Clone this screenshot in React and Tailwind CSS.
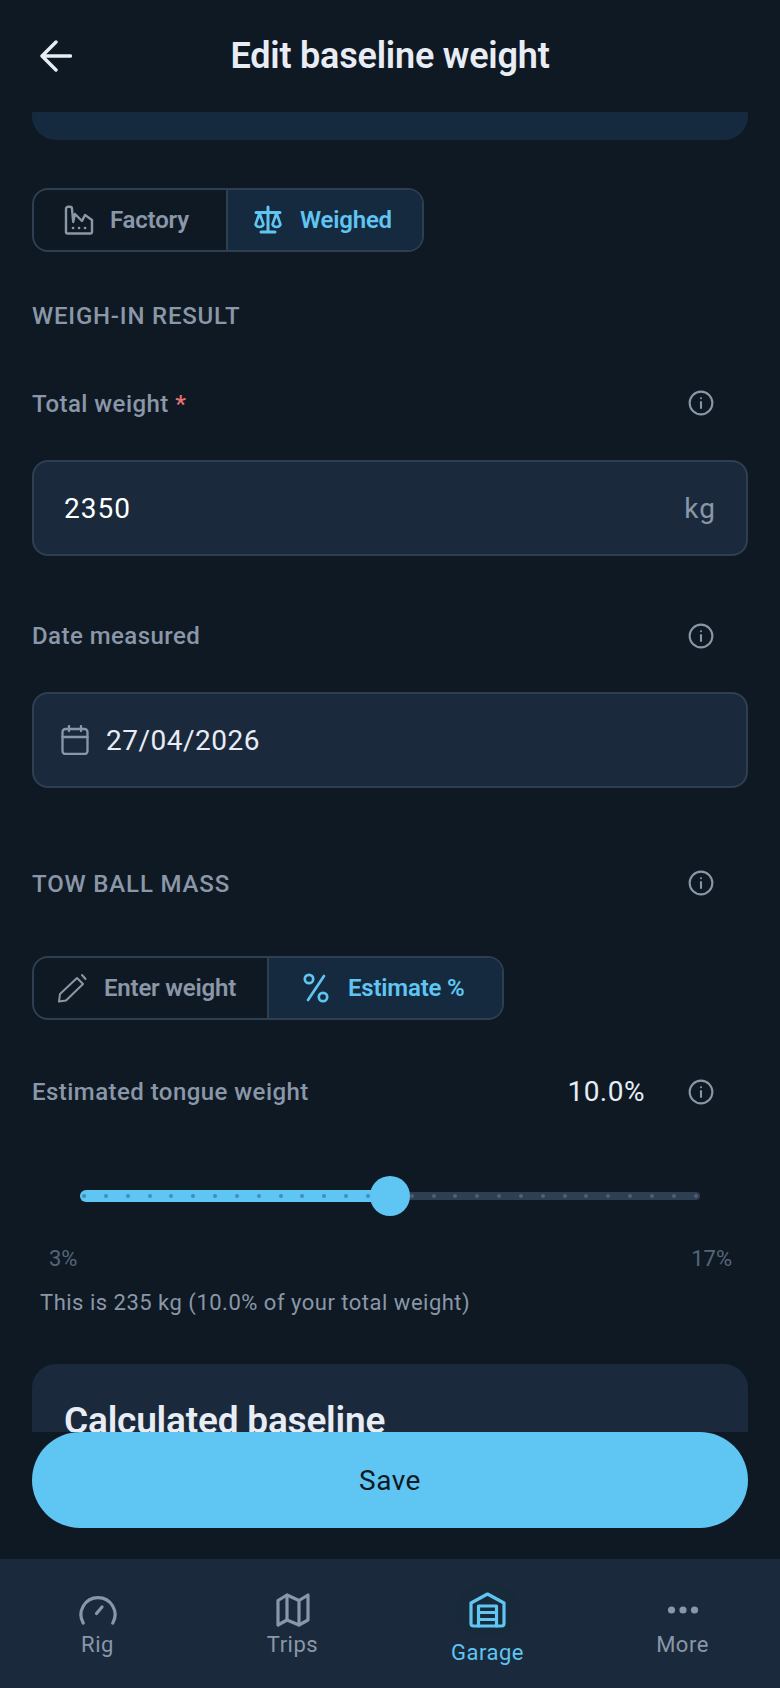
import React from "react";

const Info = () => (
  <svg viewBox="0 0 24 24" className="w-[26px] h-[26px] mr-[34px] text-[#8a97a8] shrink-0" fill="none" stroke="currentColor" strokeWidth="1.9" strokeLinecap="round">
    <circle cx="12" cy="12" r="10.5" />
    <path d="M12 11.2v5.3" />
    <circle cx="12" cy="7.6" r="0.4" fill="currentColor" strokeWidth="1.2" />
  </svg>
);

const Label = ({ children, className = "" }) => (
  <div className={"flex items-center justify-between h-12 " + className}>
    {children}
    <Info />
  </div>
);

const Seg = ({ active, icon, text, className = "" }) => (
  <div className={"flex items-center h-full text-[24px] font-semibold tracking-[-0.2px] " + (active ? "bg-[#162a3f] text-[#5fc5f2] " : "text-[#8a97a8] ") + className}>
    {icon}
    {text}
  </div>
);

const Factory = () => (
  <svg viewBox="0 0 30 30" className="w-[30px] h-[30px] mr-[16px]" fill="none" stroke="currentColor" strokeWidth="2.4" strokeLinejoin="round" strokeLinecap="round">
    <path d="M2 27V4a2.2 2.2 0 0 1 2.2-2.2h1.6A2.2 2.2 0 0 1 8 4l1.2 13L11 9l7 7 3-6 7 5v12a1.5 1.5 0 0 1-1.5 1.5h-23A1.5 1.5 0 0 1 2 27Z" />
    <path d="M9 23h.1M15 23h.1M21 23h.1" strokeWidth="2.6" />
  </svg>
);

const Scale = () => (
  <svg viewBox="0 0 30 30" className="w-[30px] h-[30px] mr-[17px]" fill="none" stroke="currentColor" strokeWidth="3" strokeLinejoin="round" strokeLinecap="round">
    <path d="M15 2v24M8 27h14M3 7.5h24" />
    <path d="M6.5 8 2.5 19.5a4.4 4.4 0 0 0 8 0ZM23.5 8 19.5 19.5a4.4 4.4 0 0 0 8 0Z" strokeWidth="2.6" />
  </svg>
);

const Pencil = () => (
  <svg viewBox="0 0 30 30" className="w-[30px] h-[30px] mr-[17px]" fill="none" stroke="currentColor" strokeWidth="2" strokeLinejoin="round" strokeLinecap="round">
    <path d="M2 28.5 3 21 20 5l6 6L9 27.5Z" />
    <path d="M25 2l3.5 4" />
  </svg>
);

const Percent = () => (
  <svg viewBox="0 0 26 30" className="w-[26px] h-[30px] mr-[19px]" fill="none" stroke="currentColor" strokeWidth="2.7" strokeLinecap="round">
    <path d="M21 3 5 27" />
    <circle cx="6" cy="6" r="4.2" />
    <circle cx="20" cy="24" r="4.2" />
  </svg>
);

const Calendar = () => (
  <svg viewBox="0 0 28 30" className="w-[28px] h-[30px] mr-[17px] text-[#8a97a8]" fill="none" stroke="currentColor" strokeWidth="2.3" strokeLinecap="round" strokeLinejoin="round">
    <rect x="1.5" y="4" width="25" height="25" rx="3" />
    <path d="M1.5 12h25M8 1v5M20 1v5" />
  </svg>
);

const Gauge = () => (
  <svg viewBox="0 0 38 30" className="w-[38px] h-[30px]" fill="none" stroke="currentColor" strokeWidth="3.2" strokeLinecap="round">
    <path d="M4.2 28A17 17 0 1 1 33.8 28" />
    <path d="M17.5 18.5 23 12" />
  </svg>
);

const MapIcon = () => (
  <svg viewBox="0 0 34 34" className="w-[34px] h-[34px]" fill="none" stroke="currentColor" strokeWidth="3.2" strokeLinejoin="round" strokeLinecap="round">
    <path d="M2 7.5 11 2l12 5.5L32 2v25l-9 5-12-5-9 5Z" />
    <path d="M11 2v25M23 7.5V32" />
  </svg>
);

const Garage = () => (
  <svg viewBox="0 0 37 36" className="w-[37px] h-[36px]" fill="none" stroke="currentColor" strokeWidth="3.2" strokeLinejoin="round" strokeLinecap="round">
    <path d="M2 11 18.5 2 35 11v20.5a2.5 2.5 0 0 1-2.5 2.5h-28A2.5 2.5 0 0 1 2 31.5Z" />
    <path d="M9.5 34V14h18v20M9.5 20.5h18M9.5 27.5h18" />
  </svg>
);

const Dots = () => (
  <svg viewBox="0 0 36 34" className="w-[36px] h-[34px]" fill="currentColor">
    <circle cx="6.5" cy="17" r="3.6" />
    <circle cx="18" cy="17" r="3.6" />
    <circle cx="29.5" cy="17" r="3.6" />
  </svg>
);

const NavItem = ({ icon, label, active }) => (
  <div className={"flex-1 flex flex-col items-center " + (active ? "text-[#5fc5f2]" : "text-[#8a97a8]")}>
    <div className="h-[52px] flex items-center justify-center">
      {active ? (
        <div className="w-[64px] h-[52px] rounded-full bg-[#18293a] flex items-center justify-center">{icon}</div>
      ) : (
        icon
      )}
    </div>
    <div className={"text-[22px] leading-[30px] tracking-[0.5px] " + (active ? "mt-[2px]" : "-mt-[6px]")}>{label}</div>
  </div>
);

const track = Array.from({ length: 29 }, (_, i) => i);

export default function App() {
  return (
    <div className="w-[780px] h-[1688px] flex flex-col overflow-hidden bg-[#0f1923] font-['Roboto',sans-serif] text-white">
      <header className="h-[112px] shrink-0 relative flex items-center justify-center">
        <svg viewBox="0 0 32 32" className="w-8 h-8 absolute left-10 top-10 text-[#e8edf5]" fill="none" stroke="currentColor" strokeWidth="3.4" strokeLinecap="round" strokeLinejoin="round">
          <path d="M30.5 16H2M16 2 2 16l14 14" />
        </svg>
        <h1 className="text-[36px] font-semibold tracking-[-0.2px] text-[#e8edf5] leading-none">Edit baseline weight</h1>
      </header>

      <main className="flex-1 min-h-0 overflow-hidden px-8">
        <div className="h-[28px] bg-[#162a3f] rounded-b-[24px]" />

        <div className="mt-12 flex h-16 w-[392px] rounded-[16px] border-2 border-[#2e3f52] overflow-hidden">
          <Seg icon={<Factory />} text="Factory" className="w-[194px] pl-[30px] border-r-2 border-[#2e3f52]" />
          <Seg active icon={<Scale />} text="Weighed" className="flex-1 pl-[25px]" />
        </div>

        <div className="mt-[50px] text-[24px] leading-[28px] font-medium tracking-[0.8px] text-[#8a97a8]">WEIGH-IN RESULT</div>

        <Label className="mt-[49px]">
          <div className="text-[24px] font-medium text-[#8a97a8] tracking-[0.45px] translate-y-px">
            Total weight <span className="text-[#e57373]">*</span>
          </div>
        </Label>
        <div className="mt-[33px] h-24 rounded-[16px] border-2 border-[#2e3f52] bg-[#1a2a3c] flex items-center justify-between px-[30px] pt-px text-[28px] tracking-[1px]">
          <span>2350</span>
          <span className="text-[#8a97a8]">kg</span>
        </div>

        <Label className="mt-[56px]">
          <div className="text-[24px] font-medium text-[#8a97a8] tracking-[0.45px]">Date measured</div>
        </Label>
        <div className="mt-[32px] h-24 rounded-[16px] border-2 border-[#2e3f52] bg-[#1a2a3c] flex items-center pl-[27px] text-[28px] tracking-[0.5px] text-[#e8edf5]">
          <Calendar />
          <span className="translate-y-px">27/04/2026</span>
        </div>

        <Label className="mt-[71px]">
          <div className="text-[24px] font-medium tracking-[0.85px] text-[#8a97a8] translate-y-px">TOW BALL MASS</div>
        </Label>

        <div className="mt-[49px] flex h-16 w-[472px] rounded-[16px] border-2 border-[#2e3f52] overflow-hidden">
          <Seg icon={<Pencil />} text="Enter weight" className="w-[235px] pl-[23px] border-r-2 border-[#2e3f52]" />
          <Seg active icon={<Percent />} text="Estimate %" className="flex-1 pl-[34px]" />
        </div>

        <Label className="mt-[48px]">
          <div className="text-[24px] font-medium text-[#8a97a8] tracking-[0.45px]">Estimated tongue weight</div>
          <div className="ml-auto mr-[43px] text-[28px] tracking-[0.5px] text-[#e8edf5]">10.0%</div>
        </Label>

        <div className="mt-[60px] mx-12 h-10 relative flex items-center">
          <div className="w-full h-2 rounded-full bg-[#2e3f52] flex items-center justify-between px-[2px]">
            {track.map((i) => (
              <span key={i} className={"relative z-10 w-1 h-1 rounded-full " + (i < 15 ? "bg-[#3f8fb8]" : "bg-[#4d6076]")} />
            ))}
          </div>
          <div className="absolute left-0 top-[14px] h-3 w-[310px] rounded-full bg-[#5fc5f2]" />
          <div className="absolute left-[290px] top-0 w-10 h-10 rounded-full bg-[#5fc5f2] z-20" />
        </div>

        <div className="mt-[29px] flex justify-between pl-[17px] text-[22px] leading-[28px] text-[#56657a] w-[700px]">
          <span>3%</span>
          <span>17%</span>
        </div>
        <div className="mt-[15px] pl-2 text-[22px] leading-[30px] tracking-[0.5px] text-[#8a97a8]">
          This is 235 kg (10.0% of your total weight)
        </div>

        <div className="mt-[46px] h-[200px] rounded-t-[24px] bg-[#1a2a3c] px-8 pt-[35px]">
          <div className="text-[37px] leading-[44px] font-semibold tracking-[-0.2px] text-[#e8edf5]">Calculated baseline</div>
        </div>
      </main>

      <div className="shrink-0 h-[127px] px-8">
        <button className="w-full h-24 rounded-full bg-[#5fc5f2] text-[#0f1923] text-[28px] tracking-[0.5px] pt-[2px]">Save</button>
      </div>

      <nav className="shrink-0 h-[129px] bg-[#1a2a3c] flex pt-[25px]">
        <NavItem icon={<Gauge />} label="Rig" />
        <NavItem icon={<MapIcon />} label="Trips" />
        <NavItem active icon={<Garage />} label="Garage" />
        <NavItem icon={<Dots />} label="More" />
      </nav>
    </div>
  );
}
